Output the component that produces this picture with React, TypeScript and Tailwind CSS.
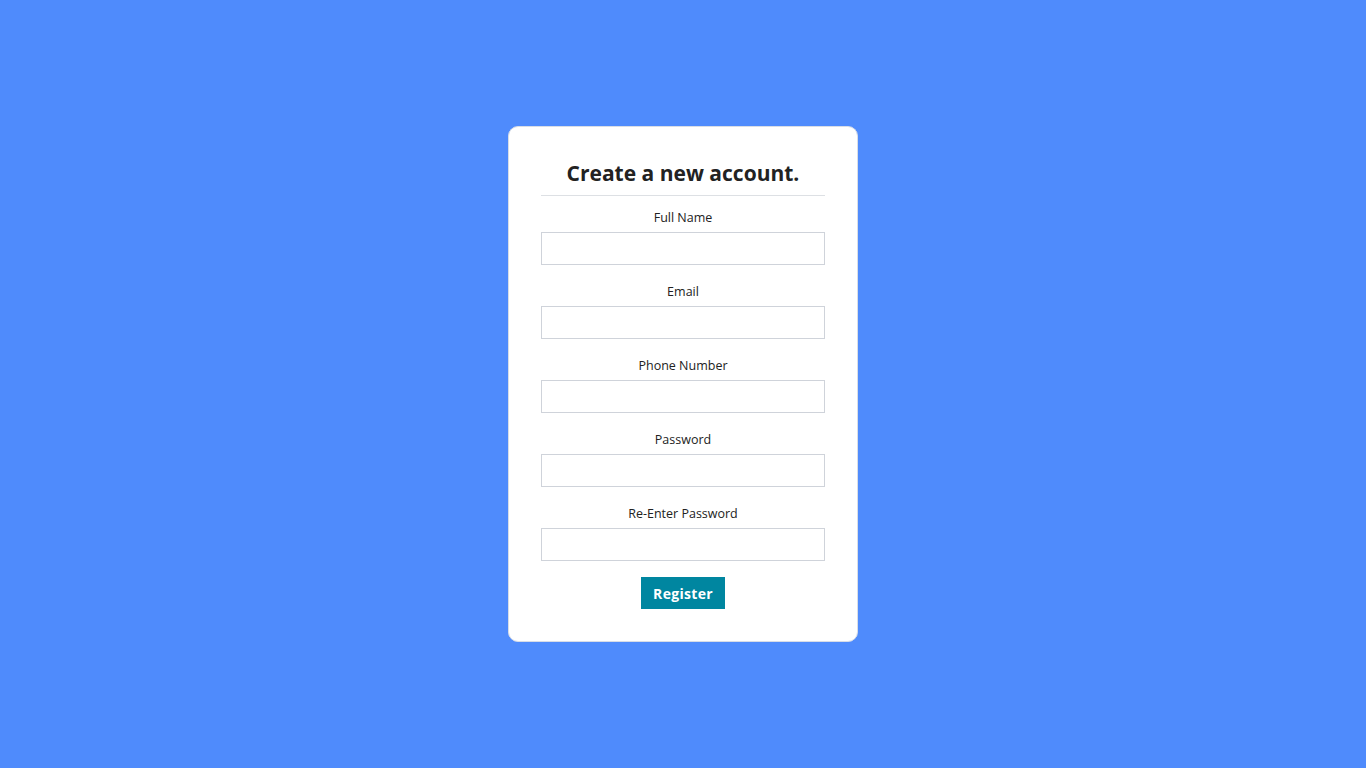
import React from "react";

const fields = ["Full Name", "Email", "Phone Number", "Password", "Re-Enter Password"];

export default function App() {
  return (
    <div
      className="w-full h-[768px] bg-[#4f8bfc] flex items-center justify-center"
      style={{ fontFamily: '"Open Sans", "Noto Sans", sans-serif' }}
    >
      <div className="w-[350px] h-[516px] bg-white rounded-[10px] border border-[#d8dde6] px-[32px] pt-[32px] pb-[32px] flex flex-col">
        <h1 className="text-[21px] leading-[28px] font-bold text-[#222] text-center">Create a new account.</h1>
        <div className="mt-[8px] h-px bg-[#dde0e4]" />
        <div className="mt-[13px] flex flex-col gap-[18px]">
          {fields.map((f) => (
            <div key={f} className="flex flex-col">
              <label className="text-[12.5px] leading-[18px] text-[#222] text-center">{f}</label>
              <input
                type={f.includes("Password") ? "password" : "text"}
                className="mt-[5px] h-[33px] w-full border border-[#cfd3da] outline-none px-2"
              />
            </div>
          ))}
        </div>
        <div className="mt-[16px] flex justify-center">
          <button className="w-[84px] h-[32px] bg-[#0086a0] text-white text-[14px] font-bold tracking-[0.3px]">
            Register
          </button>
        </div>
      </div>
    </div>
  );
}
